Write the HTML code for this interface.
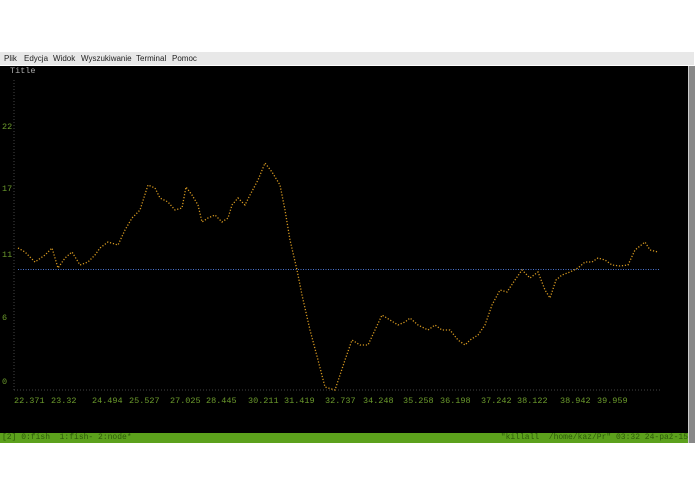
<!DOCTYPE html>
<html><head><style>
body{margin:0;width:695px;height:494px;background:#fff;position:relative;overflow:hidden;font-family:"Liberation Sans",sans-serif}
#menu{position:absolute;top:52px;left:0;width:694px;height:13px;background:#e8e8e8;font-size:8px;color:#222}
#menu span{position:absolute;top:2px}
#term{position:absolute;top:66px;left:0;width:688px;height:377px;background:#000}
#sb{position:absolute;top:66px;left:688px;width:6px;height:377px;background:#888;border-left:1px solid #ccc}
.m{font-family:"Liberation Mono",monospace;font-size:8.5px;position:absolute}
.g{color:#6b9a2c}
#status{position:absolute;top:433px;left:0;width:688px;height:10px;background:#5ca11c;font-family:"Liberation Mono",monospace;font-size:8px;color:#2d5a0a;line-height:10px;white-space:pre}
</style></head><body>
<div id="menu"><span style="left:4px">Plik</span><span style="left:24px">Edycja</span><span style="left:53px">Widok</span><span style="left:81px">Wyszukiwanie</span><span style="left:136px">Terminal</span><span style="left:172px">Pomoc</span></div>
<div id="term"></div>
<div id="sb"></div>
<div class="m" style="left:10px;top:66px;color:#aaa">Title</div>
<div class="m g" style="left:2px;top:122px">22</div>
<div class="m g" style="left:2px;top:184px">17</div>
<div class="m g" style="left:2px;top:250px">11</div>
<div class="m g" style="left:2px;top:313px">6</div>
<div class="m g" style="left:2px;top:377px">0</div>
<div class="m g" style="top:396px;left:0;width:688px">
<span style="position:absolute;left:14px">22.371</span><span style="position:absolute;left:51px">23.32</span><span style="position:absolute;left:92px">24.494</span><span style="position:absolute;left:129px">25.527</span><span style="position:absolute;left:170px">27.025</span><span style="position:absolute;left:206px">28.445</span><span style="position:absolute;left:248px">30.211</span><span style="position:absolute;left:284px">31.419</span><span style="position:absolute;left:325px">32.737</span><span style="position:absolute;left:363px">34.248</span><span style="position:absolute;left:403px">35.258</span><span style="position:absolute;left:440px">36.198</span><span style="position:absolute;left:481px">37.242</span><span style="position:absolute;left:517px">38.122</span><span style="position:absolute;left:560px">38.942</span><span style="position:absolute;left:597px">39.959</span></div>
<svg style="position:absolute;left:0;top:0" width="695" height="494">
<line x1="14" y1="80" x2="14" y2="390" stroke="#444" stroke-dasharray="1 2"/>
<line x1="14" y1="390" x2="660" y2="390" stroke="#444" stroke-dasharray="1 2"/>
<line x1="18" y1="269.5" x2="660" y2="269.5" stroke="#4a74d0" stroke-dasharray="1 1.5"/>
<polyline fill="none" stroke="#d89a20" stroke-width="1.3" stroke-dasharray="1.2 1.8" points="18,248 25,252 35,262 45,255 52,248 58,268 65,258 72,252 80,265 88,262 95,255 100,248 108,242 118,245 125,230 132,218 140,210 148,185 155,188 160,198 168,202 175,210 182,208 186,187 192,195 198,205 202,222 208,218 215,215 222,222 228,218 232,205 238,198 245,205 250,195 258,180 265,163 272,172 280,185 285,210 290,240 297,270 302,295 310,330 318,360 325,387 335,390 345,360 352,340 360,345 368,345 375,330 382,315 390,320 398,325 405,322 410,318 418,325 428,330 435,325 442,330 450,330 458,340 465,345 470,340 478,335 485,325 492,305 500,290 507,292 515,280 522,270 530,278 538,272 545,290 550,298 556,280 562,275 570,272 578,268 585,262 592,262 598,258 605,260 612,265 620,266 628,265 635,250 645,242 650,250 658,252"/>
</svg>
<div id="status"><span style="position:absolute;left:2px">[2] 0:fish  1:fish- 2:node*</span><span style="position:absolute;right:0">"killall  /home/kaz/Pr" 03:32 24-paź-15</span></div>
</body></html>
